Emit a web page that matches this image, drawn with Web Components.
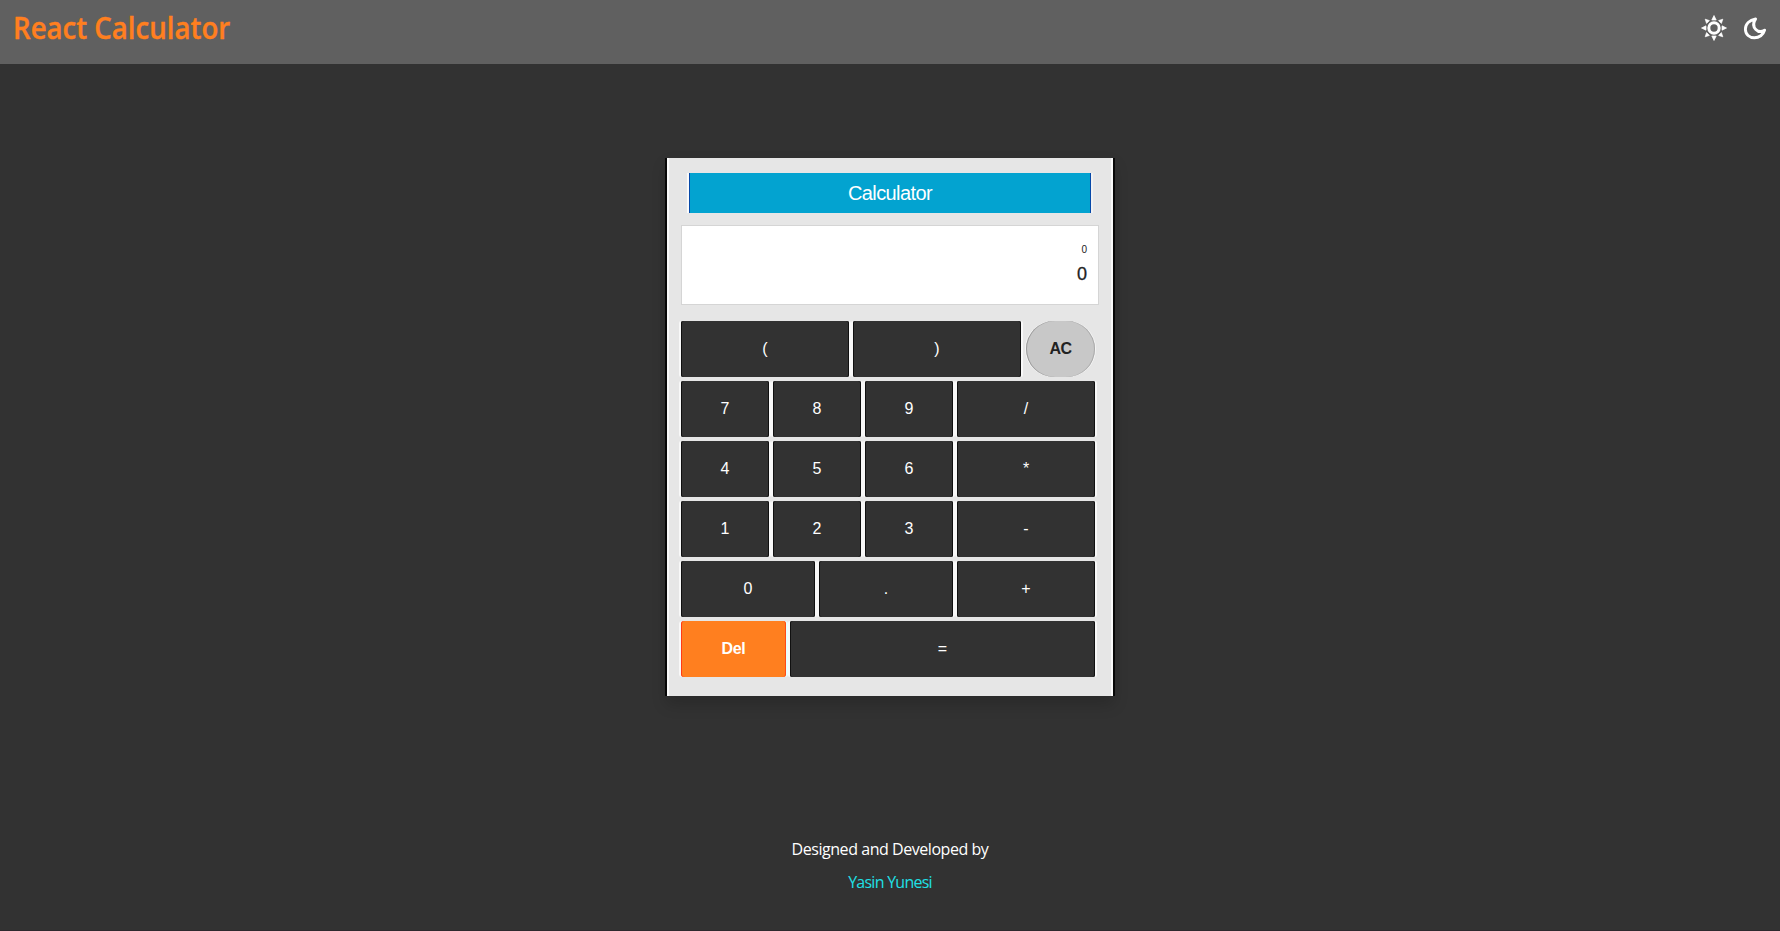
<!DOCTYPE html>
<html lang="en"><head><meta charset="utf-8"><title>React Calculator</title>
<style>html,body{margin:0;height:100%;background:#323232}body{font-family:"Open Sans","Noto Sans",sans-serif;overflow:hidden}</style></head>
<body><calc-app></calc-app>
<script>
const define=(name,html,init)=>customElements.define(name,class extends HTMLElement{
  constructor(){super();this.attachShadow({mode:'open'}).innerHTML=html;}
  connectedCallback(){if(init)init(this);}
});
define('theme-icons',`<style>:host{display:flex;gap:16px;align-items:center}svg{display:block;overflow:visible}</style>
<svg width="26" height="26" viewBox="0 0 26 26"><circle cx="13" cy="13" r="5.2" fill="none" stroke="#fff" stroke-width="3"/>
<g fill="#fff" stroke="#fff" stroke-width=".7" stroke-linejoin="round"><path d="M13 0.5L15.2 5H10.8Z"/><path d="M13 25.5L15.2 21H10.8Z"/><path d="M.5 13L5 10.8V15.2Z"/><path d="M25.5 13L21 10.8V15.2Z"/><path d="M4.2 4.2L8.4 5.6L5.6 8.4Z"/><path d="M21.8 4.2L17.6 5.6L20.4 8.4Z"/><path d="M4.2 21.8L8.4 20.4L5.6 17.6Z"/><path d="M21.8 21.8L17.6 20.4L20.4 17.6Z"/></g></svg>
<svg width="24" height="24" viewBox="0 0 24 24" fill="none" stroke="#fff" stroke-width="2.9" stroke-linejoin="round"><path d="M12.6 3C6.5 4.2 2.4 8 2.4 13.2C2.4 18.4 6.4 21.8 11.5 21.8C16 21.8 20.4 18.8 21.6 14.2C18.8 16 15.3 16 12.8 13.4C10 10.6 10.2 6.6 12.6 3Z"/></svg>`);
define('app-header',`<style>:host{display:flex;height:64px;box-sizing:border-box;background:#606060;justify-content:space-between;padding:0 13px;align-items:flex-start}
h1{margin:5px 0 0;font-size:30.5px;line-height:44px;font-weight:600;color:#ff7f1f;white-space:nowrap;transform:scaleX(.905);transform-origin:0 0;-webkit-text-stroke:.4px #ff7f1f}theme-icons{margin-top:15px}</style><h1><slot></slot></h1><theme-icons></theme-icons>`);
define('calc-title',`<style>:host{display:block;margin:0 7px;height:40px;background:#03a3d0;color:#fff;font-size:20px;line-height:40px;text-align:center;letter-spacing:-.6px;box-shadow:inset 1px 0 #0749a8,inset -1px 0 #0749a8,-2px 0 #fafafa,2px 0 #f2f2f2}</style><slot></slot>`);
define('calc-display',`<style>:host{display:flex;flex-direction:column;align-items:flex-end;box-sizing:border-box;height:80px;margin:12px -1px 0 -1px;background:#fff;border:1px solid #d5d5d5;padding:17px 11px 0;color:#222}
.s{font-size:10px;line-height:14px}.b{font-size:18px;line-height:22px;margin-top:6px;-webkit-text-stroke:.3px}</style><div class="s"><slot name="expression"></slot></div><div class="b"><slot></slot></div>`);
define('calc-key',`<style>:host{display:flex;align-items:center;justify-content:center;min-width:0;height:56px;box-sizing:border-box;background:#323232;color:#fff;font-size:16px;border-radius:2px;box-shadow:inset 1px 0 #101010,inset -1px 0 #101010,-2px 0 #f8f8f8,2px 0 #f8f8f8}
:host([kind=clear]){background:#c8c8c8;color:#222;font-weight:700;letter-spacing:-.6px;margin-left:1px;border-radius:28px;box-shadow:inset 1px 0 #999,inset -1px 0 #aaa,1px 0 #f5f5f5,-1px 0 #f5f5f5}
:host([kind=delete]){background:#ff7f1f;font-weight:700;letter-spacing:-.3px;border-radius:3px;box-shadow:inset 1px 0 #ff3a18,inset -1px 0 #ff4a18,-2px 0 #f8f8f8,2px 0 #e5ffff}</style><slot></slot>`);
define('key-row',`<style>:host{display:grid;column-gap:4px}</style><slot></slot>`,e=>{e.style.gridTemplateColumns=e.getAttribute('columns')});
define('calc-panel',`<style>:host{display:block;box-sizing:border-box;width:446px;height:538px;padding:15px 15px 0;background:#e6e6e6;font-family:"Liberation Sans",Arial,sans-serif;box-shadow:inset 2px 0 #fafafa,inset -2px 0 #fafafa,-2px 0 #080808,2px 0 #080808,0 8px 14px 1px rgba(0,0,0,.16)}
.keys{display:grid;gap:4px;margin:16px 3px 0 -1px}</style><slot name="top"></slot><div class="keys"><slot></slot></div>`);
define('app-footer',`<style>:host{display:flex;flex-direction:column;align-items:center;color:#fff;font-size:16px;line-height:32.5px;letter-spacing:-.45px}.a{color:#1fe0e6;letter-spacing:-.75px}</style><div><slot></slot></div><div class="a"><slot name="author"></slot></div>`);
define('calc-app',`<style>:host{display:flex;flex-direction:column;height:931px;box-sizing:border-box;border-bottom:1px solid #2d292d}calc-panel{align-self:center;margin-top:94px;flex:none}app-footer{margin-top:137px}</style>
<app-header>React Calculator</app-header>
<calc-panel><calc-title slot="top">Calculator</calc-title><calc-display slot="top"><span slot="expression">0</span>0</calc-display>
<key-row columns="168px 168px 1fr"><calc-key>(</calc-key><calc-key>)</calc-key><calc-key kind="clear">AC</calc-key></key-row>
<key-row columns="88px 88px 88px 1fr"><calc-key>7</calc-key><calc-key>8</calc-key><calc-key>9</calc-key><calc-key>/</calc-key></key-row>
<key-row columns="88px 88px 88px 1fr"><calc-key>4</calc-key><calc-key>5</calc-key><calc-key>6</calc-key><calc-key>*</calc-key></key-row>
<key-row columns="88px 88px 88px 1fr"><calc-key>1</calc-key><calc-key>2</calc-key><calc-key>3</calc-key><calc-key>-</calc-key></key-row>
<key-row columns="134px 134px 1fr"><calc-key>0</calc-key><calc-key>.</calc-key><calc-key>+</calc-key></key-row>
<key-row columns="105px 1fr"><calc-key kind="delete">Del</calc-key><calc-key>=</calc-key></key-row></calc-panel>
<app-footer>Designed and Developed by<span slot="author">Yasin Yunesi</span></app-footer>`);
</script></body></html>
